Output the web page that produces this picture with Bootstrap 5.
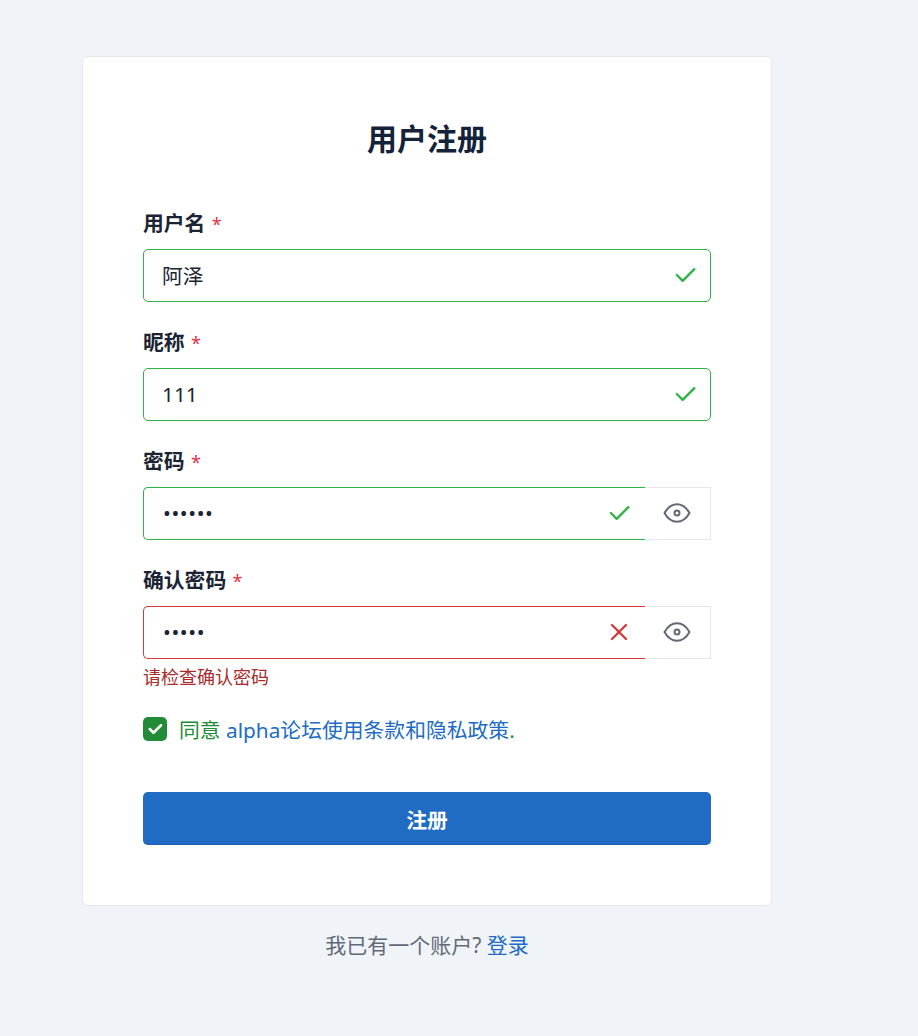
<!DOCTYPE html>
<html lang="zh-CN">
<head>
  <meta charset="UTF-8" />
  <meta name="viewport" content="width=device-width, initial-scale=1.0" />
  <title>用户注册</title>
  <link href="https://cdn.jsdelivr.net/npm/bootstrap@5.3.0/dist/css/bootstrap.min.css" rel="stylesheet">
  <style>
    body {
      background-color: #f0f4f9;
      font-family: "Noto Sans", "Noto Sans CJK SC", sans-serif;
      font-size: 20.8px;
      color: #1b2433;
    }
    .page-wrap { width: 690px; margin-left: 82px; padding-top: 56px; }
    .reg-card { border: 1px solid #e4e7eb; border-radius: 6px; padding: 59px 60px 60px; height: 850px; }
    .reg-title { font-size: 30px; font-weight: 700; line-height: 46px; margin: 0 0 47px; color: #14233a; }
    .field-label { display: block; font-weight: 600; line-height: 28px; margin-bottom: 11px; font-size: 20.8px; }
    .req { color: #dc3545; font-weight: 400; font-size: 18px; margin-left: 1px; }
    .field { margin-bottom: 26px; }
    .field-input { position: relative; flex: 1 1 auto; min-width: 0; }
    .field-input .form-control {
      height: 53px; padding: 0 60px 2px 18px; font-size: 20.8px; color: #1b2433;
      border-radius: 5px; box-shadow: none;
    }
    .is-good .form-control { border-color: #2fb344; }
    .is-bad .form-control { border-color: #d63939; }
    .with-eye .form-control { border-top-right-radius: 0; border-bottom-right-radius: 0; border-right: 0; }
    input[type=password].form-control { letter-spacing: .6px; padding-left: 19px; }
    .state-icon { position: absolute; right: 12px; top: 12px; width: 28px; height: 28px; fill: none; stroke-width: 2; stroke-linecap: round; stroke-linejoin: round; }
    .is-good .state-icon { stroke: #2fb344; }
    .is-bad .state-icon { stroke: #d63939; }
    .eye-btn {
      width: 66px; height: 53px; flex: none; display: flex; align-items: center; justify-content: center;
      background: #fff; border: 1px solid #e6e7e9; border-left: 0; padding: 0 2px 1px 0;
    }
    .eye-btn svg { width: 30px; height: 30px; fill: none; stroke: #626976; stroke-width: 1.6; stroke-linecap: round; stroke-linejoin: round; }
    .err-text { color: #a82a2a; font-size: 18px; line-height: 26px; margin-top: 5px; }
    .agree-row { margin-top: -3px; line-height: 30px; }
    .agree-box { width: 24px; height: 24px; flex: none; border-radius: 5px; background: #228b37; display: flex; align-items: center; justify-content: center; }
    .agree-box svg { width: 18px; height: 18px; fill: none; stroke: #fff; stroke-width: 3.4; stroke-linecap: round; stroke-linejoin: round; }
    .agree-text { color: #228b37; padding-top: 2px; }
    .blue-link { color: #206bc4; text-decoration: none; }
    .submit-btn { flex: none; height: 53px; font-size: 20.8px; font-weight: 700; border-radius: 5px; background: #206bc4; border: 0; border-bottom: 1px solid #1c5fb0; color: #fff; margin-top: 47px; padding-top: 10px; padding-bottom: 4px; }
    .foot-text { color: #626976; margin-top: 24px; line-height: 30px; font-size: 21px; }
  </style>
</head>
<body>
  <div class="page-wrap">
    <div class="card reg-card">
      <h2 class="reg-title text-center">用户注册</h2>

      <div class="field is-good">
        <label class="field-label">用户名 <span class="req">*</span></label>
        <div class="field-input">
          <input type="text" class="form-control" value="阿泽">
          <svg class="state-icon" viewBox="0 0 24 24"><path d="M5 12l5 5l10 -10"/></svg>
        </div>
      </div>

      <div class="field is-good">
        <label class="field-label">昵称 <span class="req">*</span></label>
        <div class="field-input">
          <input type="text" class="form-control" value="111">
          <svg class="state-icon" viewBox="0 0 24 24"><path d="M5 12l5 5l10 -10"/></svg>
        </div>
      </div>

      <div class="field is-good">
        <label class="field-label">密码 <span class="req">*</span></label>
        <div class="d-flex with-eye">
          <div class="field-input">
            <input type="password" class="form-control" value="123456">
            <svg class="state-icon" viewBox="0 0 24 24"><path d="M5 12l5 5l10 -10"/></svg>
          </div>
          <div class="eye-btn"><svg viewBox="0 0 24 24"><circle cx="12" cy="12" r="2"/><path d="M22 12c-2.667 4.667 -6 7 -10 7s-7.333 -2.333 -10 -7c2.667 -4.667 6 -7 10 -7s7.333 2.333 10 7"/></svg></div>
        </div>
      </div>

      <div class="field is-bad">
        <label class="field-label">确认密码 <span class="req">*</span></label>
        <div class="d-flex with-eye">
          <div class="field-input">
            <input type="password" class="form-control" value="12345">
            <svg class="state-icon" viewBox="0 0 24 24"><path d="M18 6l-12 12"/><path d="M6 6l12 12"/></svg>
          </div>
          <div class="eye-btn"><svg viewBox="0 0 24 24"><circle cx="12" cy="12" r="2"/><path d="M22 12c-2.667 4.667 -6 7 -10 7s-7.333 -2.333 -10 -7c2.667 -4.667 6 -7 10 -7s7.333 2.333 10 7"/></svg></div>
        </div>
        <div class="err-text">请检查确认密码</div>
      </div>

      <div class="d-flex align-items-center gap-2 agree-row">
        <span class="agree-box"><svg viewBox="0 0 24 24"><path d="M5 12l5 5l10 -10"/></svg></span>
        <span class="agree-text ms-1">同意 <a href="#" class="blue-link">alpha论坛使用条款和隐私政策</a>.</span>
      </div>

      <button type="button" class="btn w-100 submit-btn">注册</button>
    </div>
    <div class="foot-text text-center">我已有一个账户? <a href="#" class="blue-link">登录</a></div>
  </div>
  <script src="https://cdn.jsdelivr.net/npm/bootstrap@5.3.0/dist/js/bootstrap.bundle.min.js"></script>
</body>
</html>
